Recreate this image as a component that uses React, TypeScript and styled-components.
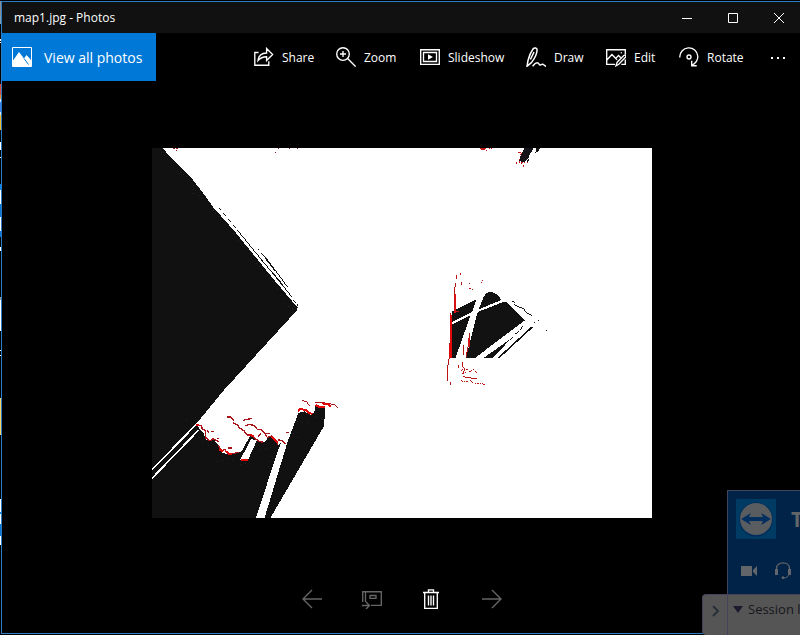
import React from "react";
import styled, { createGlobalStyle } from "styled-components";

const GlobalStyle = createGlobalStyle`
  *, *::before, *::after { box-sizing: border-box; }
  body { margin: 0; background: #000; overflow: hidden; }
  button { font: inherit; color: inherit; background: none; border: 0; padding: 0; margin: 0; }
  h1, p { margin: 0; font: inherit; }
  svg { display: block; flex: none; }
`;

const Desktop = styled.div`
  position: relative;
  display: grid;
  grid-template-columns: 1px minmax(0, 1fr);
  min-height: 100vh;
  padding: 1px 0;
  overflow: hidden;
  background: #000;
  font-family: "Open Sans", "Noto Sans", sans-serif;
  color: #fff;
`;

const DesktopEdge = styled.div`
  background: linear-gradient(
    #8c8c8c 0 14px, #7d9db0 14px 23px, #000 23px 38px, #fff 38px 40px, #000 40px 41px, #fff 41px 42px,
    #000 42px 83px, #e04a3c 83px 94px, #e0912c 94px 98px, #dbe8fa 98px 101px, #3b82f0 101px 111px,
    #dbe8fa 111px 114px, #f2b92b 114px 129px, #000 129px 141px, #fff 141px 149px, #000 149px 156px,
    #fff 156px 157px, #000 157px 183px, #0a84e8 183px 189px, #fff 189px 203px, #0a76d8 203px 216px,
    #fff 216px 230px, #0a76d8 230px 236px, #000 236px 246px, #fff 246px 250px, #000 250px 296px,
    #999 296px 299px, #fff 299px 330px, #000 330px 349px, #fff 349px 350px, #000 350px 354px,
    #fff 354px 355px, #000 355px 397px, #fcd465 397px 434px, #000 434px 498px, #fff 498px 511px,
    #0a84e8 511px 513px, #fff 513px 523px, #0a76d8 523px 535px, #fff 535px 544px, #000 544px
  );
`;

const Window = styled.main`
  display: flex;
  flex-direction: column;
  margin-right: -2px;
  border: 1px solid #2b7cc4;
  border-right: 0;
  background: #000;
`;

const TitleBar = styled.header`
  display: flex;
  justify-content: space-between;
  height: 31px;
  background: #111;
`;

const Title = styled.h1`
  padding-left: 12px;
  font-size: 12px;
  line-height: 31px;
`;

const Caption = styled.div`
  display: flex;
`;

const CaptionButton = styled.button`
  display: grid;
  place-items: center;
  width: 46px;
`;

const CommandBar = styled.nav`
  display: flex;
  justify-content: space-between;
  height: 48px;
`;

const AllPhotosButton = styled.button`
  display: flex;
  align-items: center;
  gap: 12px;
  width: 154px;
  padding-left: 10px;
  background: #0078d7;
  font-size: 14px;
  white-space: nowrap;
`;

const Commands = styled.div`
  display: flex;
`;

const CommandButton = styled.button<{ $width: number }>`
  display: flex;
  align-items: center;
  gap: 8px;
  min-width: ${(p) => p.$width}px;
  padding-left: 12px;
  font-size: 12px;
  white-space: nowrap;
`;

const MoreButton = styled(CaptionButton)`
  width: 48px;
`;

const Stage = styled.section`
  flex: 1;
  display: flex;
  justify-content: center;
  align-items: center;
  padding: 26px 16px 16px;
`;

const Photo = styled.svg`
  background: #fff;
`;

const BottomBar = styled.nav`
  display: flex;
  justify-content: center;
  padding: 0 0 10px;
`;

const BottomButton = styled.button`
  display: grid;
  place-items: center;
  width: 60px;
  height: 48px;
  color: #fff;
  &:disabled { color: #666; }
`;

const Remote = styled.aside`
  position: absolute;
  right: 0;
  bottom: 0;
  width: 98px;
  overflow: hidden;
  display: flex;
  flex-direction: column;
`;

const RemoteHeader = styled.div`
  margin-left: 25px;
  height: 104px;
  padding: 8px 0 0 8px;
  border: 1px solid #42465c;
  border-width: 1px 0 0 1px;
  background: #002347;
  color: #626569;
`;

const Brand = styled.div`
  display: flex;
  align-items: center;
  gap: 15px;
  font: bold 21px/40px "Open Sans", sans-serif;
  white-space: nowrap;
`;

const RemoteTools = styled.div`
  display: flex;
  align-items: center;
  gap: 16px;
  padding: 22px 0 0 4px;
`;

const RemoteFooter = styled.div`
  display: flex;
  height: 41px;
  border: 1px solid #45435a;
  border-width: 1px 0 0 1px;
  border-radius: 4px 0 0 4px;
  background: #555;
  color: #16161c;
`;

const RemoteToggle = styled.button`
  display: flex;
  justify-content: center;
  flex: none;
  width: 25px;
  padding-top: 10px;
  border-right: 1px solid #45435a;
`;

const SessionButton = styled.button`
  display: flex;
  align-items: flex-start;
  flex: none;
  gap: 5px;
  padding: 4px 0 0 5px;
  font-size: 13px;
  line-height: 20px;
  white-space: nowrap;
`;

const Caret = styled.span`
  margin-top: 7px;
  border: 5px solid transparent;
  border-top: 7px solid #1d1c2e;
  border-bottom: 0;
`;

type IconProps = { children: React.ReactNode; size?: number; line?: number };
const Icon = ({ children, size = 20, line = 1.35 }: IconProps) => (
  <svg width={size} height={size} viewBox={`0 0 ${size} ${size}`} fill="none" stroke="currentColor" strokeWidth={line} aria-hidden="true">
    {children}
  </svg>
);

const commands = [
  { label: "Share", width: 82, icon: <path d="M4.5 5.5H.8v12.7h14v-4M4 13.6c.5-5 3.2-7.5 8.6-7.6V1.5l6 6-6 6V9.7c-4 0-6.3 1.1-8.6 3.9Z" /> },
  { label: "Zoom", width: 84, icon: <><circle cx="7" cy="7" r="6.3" /><path d="M7 4v6M4 7h6M11.6 11.6l8 8" /></> },
  { label: "Slideshow", width: 106, icon: <><path d="M.7 2.7h18.6v14.6H.7Z" /><path d="M3.5 5.5h13v9h-13Z" /><path d="m8 7.3 5 2.7-5 2.7Z" fill="currentColor" stroke="none" /></> },
  { label: "Draw", width: 80, icon: <path d="M1 19.3 2 13.5C3 9.5 5.2 4.5 7.2 1.8c1.3-1.6 4-.9 3.9 1.2-.2 3.6-3.2 9.4-5.5 12.4L1 19.3ZM4.4 12.5 8 5M6.6 19.2c1.5-1.7 2.6-3.4 4.6-3.4 2.2 0 1.6 2.8 3.2 2.2 1.2-.5 1.8-1.2 2.9-.5l2.7 2" strokeWidth="1.5" /> },
  { label: "Edit", width: 73, icon: <><path d="M9 17.3H.7V2.7h18.6v5M.9 13l5-5.5 5.2 5.3M9.8 11.4l2.7-2.9 2.3 2.2M19.3 12.5v4.8h-4" /><path d="m10 18.8 1.2-3.6 6.6-6.7c1.6-1 2.7.3 1.7 1.8l-6.7 7Z" /><circle cx="15.3" cy="5.8" r=".7" fill="currentColor" stroke="none" /></> },
  { label: "Rotate", width: 87, icon: <><path d="M.8 10.5A9 9 0 0 1 18.8 9.3c.1 4-2.1 7-5.8 9M12.7 13.7v5h5" /><circle cx="10" cy="10" r="2" /></> },
];

const MapPhoto = () => (
  <Photo width="500" height="370" viewBox="0 0 500 370" role="img" aria-label="map1.jpg" shapeRendering="crispEdges">
    <g transform="translate(-2 -8) scale(.3333333)" fill="none" stroke="#111" strokeWidth="3">
      <path fill="#111" stroke="none" d="M6 24H38L58 48 76 66 118 106 154 152 190 202 252 272 314 348 376 424 443 503 440 512 222 750H6Z" />
      <path d="M206 204 212 210M220 220 227 227M234 237 242 245M248 254 258 264M262 270 314 334 378 412 425 470M429 480 437 487M441 493 445 498M324 328 326 330M334 340 348 354 412 440M326 350 360 390M368 398 400 436" />
      <path d="M347 355 377 394" strokeWidth="4" />
      <path stroke="#941a20" d="M69 25h6m2 0h7m-6 5h4M375 37h3m6-12h3m29 0h3m22 0h3" />
      <path stroke="#242424" strokeDasharray="3 9" d="M34 38 50 52M80 88 110 110M131 134v36M145 165 165 185M180 200 215 242M250 280 285 330M320 370 328 380M345 395 385 450M390 465 405 480M415 500 435 510" />
    </g>
    <g transform="translate(278 -8) scale(.3333333)">
      <path fill="#151318" d="m284 24h25l-2 9-7 8-6 16-11 10-17-4 8-20 5-11ZM319 24h11l-5 10-9 5Zm-29 42 4-8h3v6Z" />
      <path fill="none" stroke="#c71616" strokeWidth="3" d="M151 25h16m-13 3h12m1 3h3m6-6h3m4 0h3M274 37h-9m9 3-5 5m-3 14 5-3m-12 10v7m9-9v4m6-3v6m5-6v5m6-4v4m7-5v5m-11 5v5" />
    </g>
    <g transform="translate(278 112) scale(.3333333)" fill="#121212">
      <path d="M67 154 139 118 127 155 64 187ZM66 193 122 165 76 295H60V200ZM161 111 169 99 184 95 202 103 214 120 146 148ZM143 156 222 125 228 126 285 181 136 293H108ZM162 293 244 235 189 293ZM203 293H210L309 202 304 200Z" />
      <path fill="none" stroke="#171717" strokeWidth="3" d="M245 121 256 131M251 132 266 141 280 145 287 157 305 166M240 239 250 230M255 223 266 215M270 209 279 199M324 181h3M313 188h3M348 211h3" />
      <g fill="none" stroke="#ba1515" strokeWidth="3">
        <path d="M78 57V45M92 40v5M78 69 74 85v14l2 13-3 15 2 25M62 160v110M58 250v40l-5 31 1 22-2 20M60 366l3 8M85 315v8M98 305v14l5 8-2 14M106 353l12-2 8 5 15 1M99 285 101 255M118 220v40M116 245l-4 30M108 292l3-15M94 75v-8M116 71h3M118 86h4M126 91v-5M153 69h4M156 62h3M77 140v18M78 156h8" />
        <path strokeDasharray="7 4 3 3" d="M92 362 107 365 120 362 132 370H150L165 373M98 348 112 355M92 332 105 325 120 335 130 328 145 345M95 340 112 336" />
      </g>
      <path d="M60 164h5l1 128-9 4 2-54Z" fill="#e00909" />
      <path d="M72 101h5v58h-5Zm43 133h4v21h-4Z" fill="#d51313" />
    </g>
    <g transform="translate(-2 242) scale(.3333333)">
      <path fill="#111" d="M6 0H222L141 99 150 120 160 126 168 150 180 152 190 147 205 166 214 186 228 192 240 195 270 187 278 178 300 138 314 144 330 157 345 156 352 145 366 138 378 154 385 166 394 158 386 175 317 386H6Z" />
      <path fill="#111" d="M445 69 463 64 482 75 492 69 497 45 512 52 526 54 522 108 360 386H343L412 158Z" />
      <path fill="#fff" d="M303 148 321 150 294 210 270 210Z" />
      <path fill="none" stroke="#fff" strokeWidth="5" d="M3 242 141 101M3 268 146 120" />
      <path fill="none" stroke="#a91518" strokeWidth="4" d="M139 104 155 107 156 116 166 122 168 145 180 152 190 146 206 155M172 122 178 128M183 124h10M200 146h8M205 166 214 182 225 178 232 190M235 174h10M232 81h10l10 12M248 98 260 103 270 115 282 122 290 134 305 138 314 144 326 154 340 157M286 108 296 103 312 106 322 118 336 120 344 130 360 130M345 134 352 142 366 138 378 150 384 164M324 140 334 128M385 150 398 152 406 162M280 91 305 85M240 193 268 186M408 128h8" />
      <path fill="none" stroke="#a91518" strokeWidth="3" d="M457 31 470 36 479 47M495 36H510L520 38 543 42 552 43 563 52" />
      <path fill="none" stroke="#e00909" strokeWidth="6" d="M444 63 450 58 468 59 476 68 488 72M496 45 510 52 524 50M515 40 535 43 541 50M298 134 312 139M366 140 382 158M208 178 220 184M228 184 236 192 245 192M272 209H294M138 105H148" />
      <path fill="none" stroke="#26202f" strokeWidth="3" strokeDasharray="3 13" d="M108 90 125 80M148 140 160 160M175 165 200 190M200 215 240 205 260 225 290 220M330 180 370 170M370 200 350 240M440 95 470 100 500 80M430 130 450 150" />
    </g>
  </Photo>
);

export default function App() {
  return (
    <Desktop>
      <GlobalStyle />
      <DesktopEdge />
      <Window>
        <TitleBar>
          <Title>map1.jpg - Photos</Title>
          <Caption>
            <CaptionButton aria-label="Minimize"><Icon size={10} line={1}><path d="M0 5.5h10" /></Icon></CaptionButton>
            <CaptionButton aria-label="Maximize"><Icon size={10} line={1}><path d="M.5.5h9v9h-9Z" /></Icon></CaptionButton>
            <CaptionButton aria-label="Close"><Icon size={10} line={1}><path d="m0 0 10 10M10 0 0 10" /></Icon></CaptionButton>
          </Caption>
        </TitleBar>
        <CommandBar aria-label="Photo commands">
          <AllPhotosButton>
            <Icon line={1}>
              <path d="M.5.5h19v19H.5Z" />
              <path d="M1 13.5 7 5l5 6.5L14.5 8l4.5 5v6H1Z" fill="currentColor" stroke="none" />
              <path d="m12 11.5 4.5 6" stroke="#0078d7" />
            </Icon>
            View all photos
          </AllPhotosButton>
          <Commands>
            {commands.map((c) => (
              <CommandButton key={c.label} $width={c.width}><Icon>{c.icon}</Icon>{c.label}</CommandButton>
            ))}
            <MoreButton aria-label="See more">
              <Icon size={16}><path d="M1 9h2M7 9h2M13 9h2" strokeWidth="2" /></Icon>
            </MoreButton>
          </Commands>
        </CommandBar>
        <Stage><MapPhoto /></Stage>
        <BottomBar aria-label="Photo navigation">
          <BottomButton disabled aria-label="Previous"><Icon><path d="M20 10H1M10 1l-9 9 9 9" /></Icon></BottomButton>
          <BottomButton disabled aria-label="Add to album"><Icon><path d="M.7 13V2.7h18.6v13.6H9M3.5 3v10M8 6.5h6v2.8H8ZM0 16.5h7M4 13l3.5 3.5L4 20" /></Icon></BottomButton>
          <BottomButton aria-label="Delete"><Icon><path d="M1 3.5h16M6.5 3V.8h5V3M2.7 4v15.3h12.6V4M6.5 6.5v10M9 6.5v10M11.5 6.5v10" /></Icon></BottomButton>
          <BottomButton disabled aria-label="Next"><Icon><path d="M0 10h19M10 1l9 9-9 9" /></Icon></BottomButton>
        </BottomBar>
      </Window>
      <Remote>
        <RemoteHeader>
          <Brand>
            <svg width="40" height="40" viewBox="0 0 40 40" aria-hidden="true">
              <rect width="40" height="40" rx="1" fill="#003b63" />
              <circle cx="20" cy="20.5" r="17" fill="#002d5c" />
              <circle cx="20" cy="20" r="16" fill="#5a5d60" />
              <path d="m5 20 10-6-2 4h14l-2-4 10 6-10 6 2-4H13l2 4Z" fill="#002f60" />
            </svg>
            T
          </Brand>
          <RemoteTools>
            <svg width="18" height="20" viewBox="0 0 18 20" fill="#626569" aria-hidden="true"><path d="M1 5h11v10H1ZM13 9l4-4v10l-4-4Z" /></svg>
            <svg width="18" height="20" viewBox="0 0 18 20" fill="none" stroke="#626569" aria-hidden="true">
              <path d="M2.5 10V7.5C2.5 0 15.5 0 15.5 7.5V10" strokeWidth="1.3" />
              <path d="M2.5 8v6M15.5 8v6" strokeWidth="3" />
              <path d="M15 13c-1 3-2.5 4-5.5 4" />
              <circle cx="9" cy="16.7" r="1" fill="#626569" />
            </svg>
          </RemoteTools>
        </RemoteHeader>
        <RemoteFooter>
          <RemoteToggle aria-label="Collapse panel"><svg width="10" height="12" viewBox="0 0 10 12" fill="none" stroke="#29303a" strokeWidth="2" aria-hidden="true"><path d="m3 1 5 5-5 5" /></svg></RemoteToggle>
          <SessionButton><Caret />Session l</SessionButton>
        </RemoteFooter>
      </Remote>
    </Desktop>
  );
}
